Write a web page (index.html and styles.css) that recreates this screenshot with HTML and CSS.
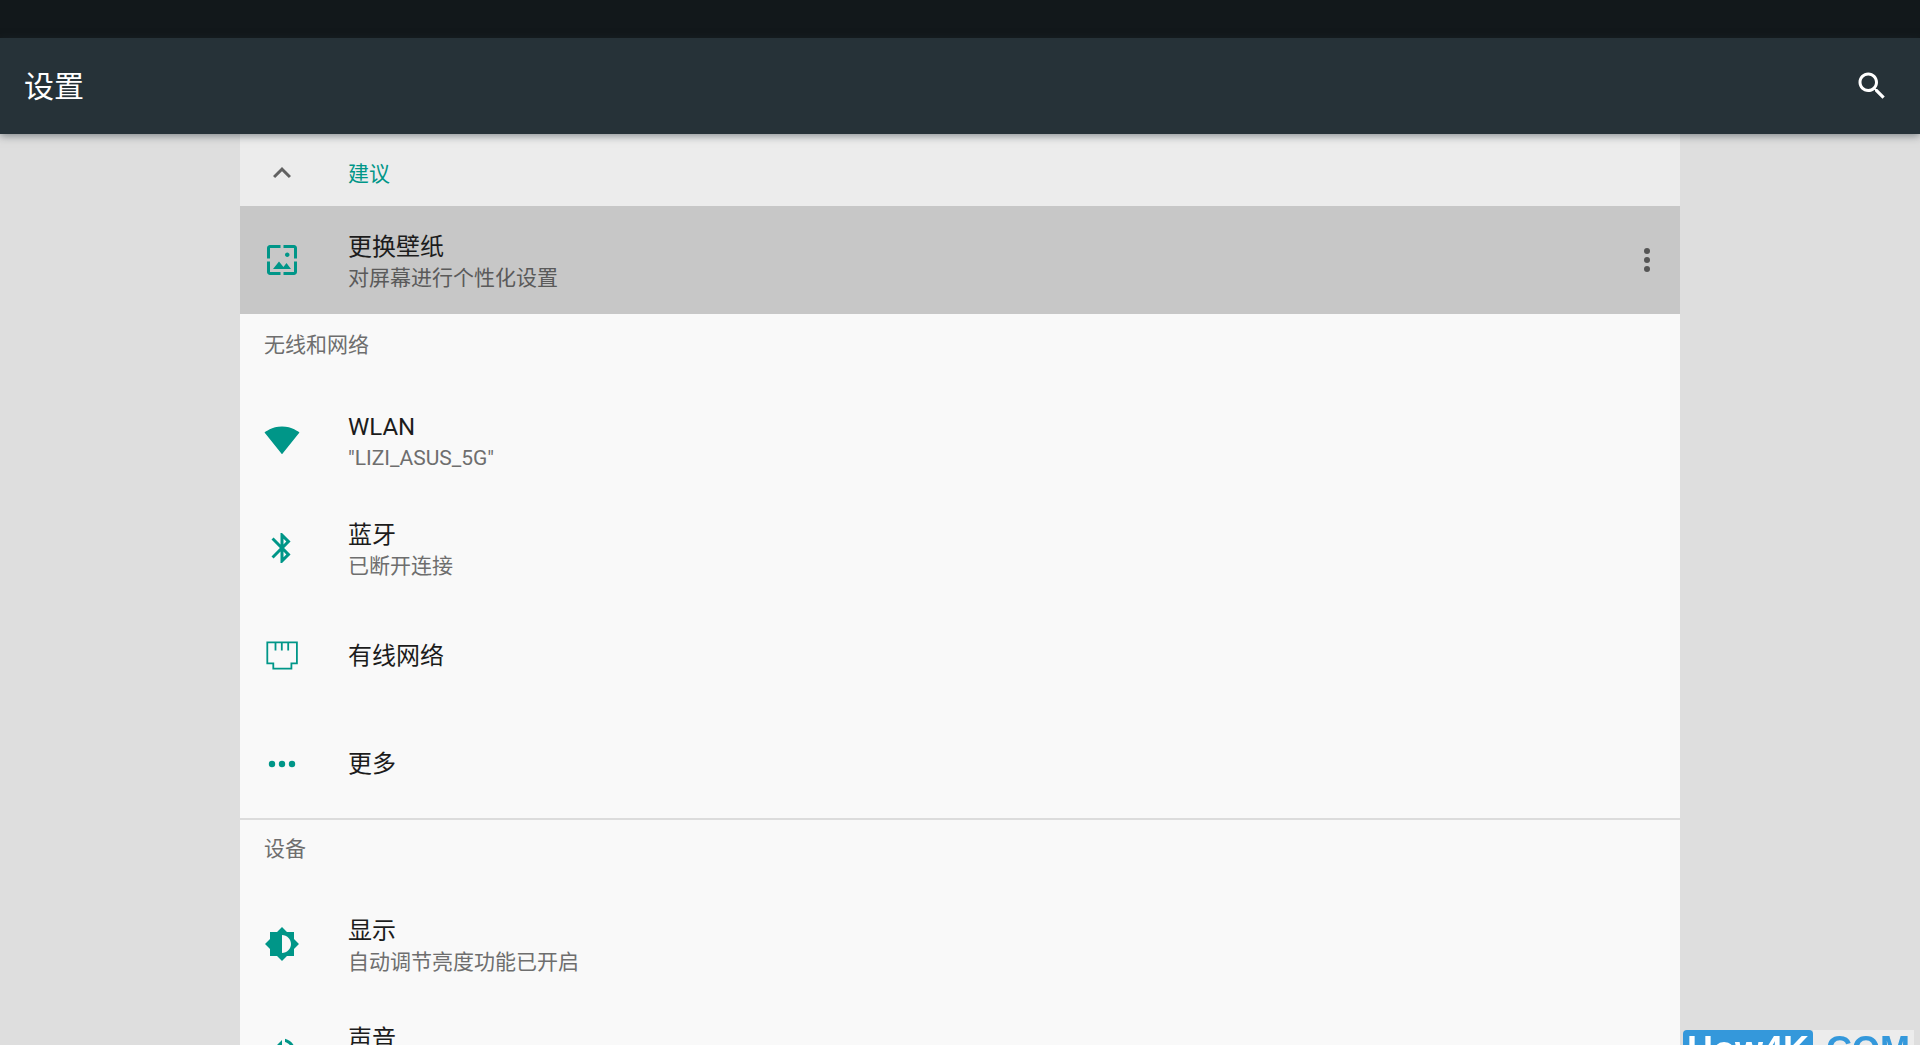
FILE: index.html
```html
<!DOCTYPE html>
<html lang="zh-CN">
<head>
    <meta charset="UTF-8">
    <meta name="viewport" content="width=device-width, initial-scale=1.0">
    <title>设置</title>
    <link rel="stylesheet" href="styles.css">
</head>
<body>
    <div class="status-bar"></div>
    <header class="app-bar">
        <h1>设置</h1>
        <button class="icon-button" type="button" aria-label="搜索">
            <svg class="icon" viewBox="0 0 24 24"><path d="M15.5 14h-.79l-.28-.27C15.41 12.59 16 11.11 16 9.5 16 5.91 13.09 3 9.5 3S3 5.91 3 9.5 5.91 16 9.5 16c1.61 0 3.09-.59 4.23-1.57l.27.28v.79l5 4.99L20.49 19l-4.99-5zm-6 0C7.01 14 5 11.99 5 9.5S7.01 5 9.5 5 14 7.01 14 9.5 11.99 14 9.5 14z"/></svg>
        </button>
    </header>

    <main class="settings">
        <button class="suggestions" type="button" aria-expanded="true">
            <svg class="icon" viewBox="0 0 24 24"><path d="M12 8l-6 6 1.41 1.41L12 10.83l4.59 4.58L18 14z"/></svg>
            <span>建议</span>
        </button>
        <div class="row selected">
            <a class="row-link" href="#wallpaper">
                <svg class="icon" viewBox="0 0 24 24"><path d="M4 4h7V2H4c-1.1 0-2 .9-2 2v7h2V4zm6 9l-4 5h12l-3-4-2.03 2.71L10 13zm7-4.5c0-.83-.67-1.5-1.5-1.5S14 7.67 14 8.5s.67 1.5 1.5 1.5S17 9.33 17 8.5zM20 2h-7v2h7v7h2V4c0-1.1-.9-2-2-2zm0 18h-7v2h7c1.1 0 2-.9 2-2v-7h-2v7zM4 13H2v7c0 1.1.9 2 2 2h7v-2H4v-7z"/></svg>
                <span class="text">
                    <span class="title">更换壁纸</span>
                    <span class="summary">对屏幕进行个性化设置</span>
                </span>
            </a>
            <button class="icon-button more" type="button" aria-label="更多选项">
                <svg class="icon" viewBox="0 0 24 24"><circle cx="12" cy="6" r="2"/><circle cx="12" cy="12" r="2"/><circle cx="12" cy="18" r="2"/></svg>
            </button>
        </div>

        <section>
            <h2>无线和网络</h2>
            <div class="row">
                <a class="row-link" href="#wlan">
                    <svg class="icon" viewBox="0 0 24 24"><path d="M12.01 21.49L23.64 7c-.45-.34-4.93-4-11.64-4C5.28 3 .81 6.66.36 7l11.63 14.49z"/></svg>
                    <span class="text">
                        <span class="title">WLAN</span>
                        <span class="summary">"LIZI_ASUS_5G"</span>
                    </span>
                </a>
            </div>
            <div class="row">
                <a class="row-link" href="#bluetooth">
                    <svg class="icon" viewBox="0 0 24 24"><path d="M17.71 7.71L12 2h-1v7.59L6.41 5 5 6.41 10.59 12 5 17.59 6.41 19 11 14.41V22h1l5.71-5.71-4.3-4.29 4.3-4.29zM13 5.83l1.88 1.88L13 9.59V5.83zm1.88 10.46L13 18.17v-3.76l1.88 1.88z"/></svg>
                    <span class="text">
                        <span class="title">蓝牙</span>
                        <span class="summary">已断开连接</span>
                    </span>
                </a>
            </div>
            <div class="row">
                <a class="row-link" href="#ethernet">
                    <svg class="icon outline" viewBox="0 0 36 36"><path d="M3.3 4.3h29.6v21.1h-5.5v5.3H9.3v-5.3h-6zM11.5 4.5v8M17.8 4.5v8M24.2 4.5v8"/></svg>
                    <span class="text">
                        <span class="title">有线网络</span>
                    </span>
                </a>
            </div>
            <div class="row">
                <a class="row-link" href="#more">
                    <svg class="icon" viewBox="0 0 36 36"><circle cx="8" cy="18" r="3.2"/><circle cx="18" cy="18" r="3.2"/><circle cx="28" cy="18" r="3.2"/></svg>
                    <span class="text">
                        <span class="title">更多</span>
                    </span>
                </a>
            </div>
        </section>

        <section class="divided">
            <h2>设备</h2>
            <div class="row">
                <a class="row-link" href="#display">
                    <svg class="icon" viewBox="0 0 24 24"><path d="M20 15.31L23.31 12 20 8.69V4h-4.69L12 .69 8.69 4H4v4.69L.69 12 4 15.31V20h4.69L12 23.31 15.31 20H20v-4.69zM12 18V6c3.31 0 6 2.69 6 6s-2.69 6-6 6z"/></svg>
                    <span class="text">
                        <span class="title">显示</span>
                        <span class="summary">自动调节亮度功能已开启</span>
                    </span>
                </a>
            </div>
            <div class="row">
                <a class="row-link" href="#sound">
                    <svg class="icon" viewBox="0 0 24 24"><path d="M3 9v6h4l5 5V4L7 9H3zm13.5 3c0-1.77-1.02-3.29-2.5-4.03v8.05c1.48-.73 2.5-2.25 2.5-4.02zM14 3.23v2.06c2.89.86 5 3.54 5 6.71s-2.11 5.85-5 6.71v2.06c4.01-.91 7-4.49 7-8.77s-2.99-7.86-7-8.77z"/></svg>
                    <span class="text">
                        <span class="title">声音</span>
                        <span class="summary">铃声音量为 50%</span>
                    </span>
                </a>
            </div>
        </section>
    </main>

    <div class="watermark"><span class="site">How4K</span><span class="domain">.COM</span></div>
</body>
</html>
```

FILE: styles.css
```css
* {
    box-sizing: border-box;
}

body {
    margin: 0;
    height: 100vh;
    display: flex;
    flex-direction: column;
    overflow: hidden;
    background-color: #dedede;
    color: #1c1c1c;
    font-family: Roboto, "Noto Sans CJK SC", sans-serif;
}

button {
    border: none;
    background: none;
    font: inherit;
    cursor: pointer;
}

.icon {
    width: 36px;
    height: 36px;
    flex: none;
    display: block;
    fill: currentColor;
}

.icon.outline {
    fill: none;
    stroke: currentColor;
    stroke-width: 1.8;
}

.status-bar {
    flex: none;
    height: 38px;
    background-color: #12181b;
}

.app-bar {
    flex: none;
    height: 96px;
    padding: 0 12px 0 24px;
    display: flex;
    align-items: center;
    justify-content: space-between;
    background-color: #263238;
    color: #fff;
    box-shadow: 0 2px 8px rgba(38, 50, 56, 0.5);
    z-index: 1;
}

.app-bar h1 {
    margin: 0;
    padding-bottom: 4px;
    font-size: 30px;
    font-weight: 400;
}

.icon-button {
    padding: 18px;
    color: inherit;
}

.settings {
    flex: 1;
    width: 75%;
    min-height: 0;
    margin: 0 auto;
    overflow: hidden;
    background-color: #f9f9f9;
}

.suggestions {
    width: 100%;
    height: 72px;
    padding: 6px 24px 0;
    display: flex;
    align-items: center;
    gap: 48px;
    background-color: #ececec;
    color: #616161;
    font-size: 21px;
}

.suggestions span {
    padding-bottom: 2px;
    color: #009688;
}

.row {
    height: 108px;
    display: flex;
    align-items: center;
}

.row.selected {
    background-color: #c7c7c7;
}

.row-link {
    flex: 1;
    height: 100%;
    padding: 0 24px;
    display: flex;
    align-items: center;
    gap: 48px;
    color: #009688;
    text-decoration: none;
}

.more {
    padding: 15px;
    color: #555;
}

.text {
    display: flex;
    flex-direction: column;
}

.title {
    color: #1c1c1c;
    font-size: 24px;
    line-height: 36px;
}

.summary {
    color: #6e6e6e;
    font-size: 21px;
    line-height: 26px;
}

.selected .summary {
    color: #5a5a5a;
}

h2 {
    height: 72px;
    margin: 0;
    padding: 16px 24px;
    color: #6e6e6e;
    font-size: 21px;
    font-weight: 400;
    line-height: 30px;
}

.divided h2 {
    padding-top: 14px;
    border-top: 2px solid #dcdcdc;
}

/* site mark runs off the bottom edge of the window */
.watermark {
    position: fixed;
    right: 6px;
    bottom: 0;
    z-index: 2;
    height: 15px;
    display: flex;
    overflow: hidden;
    font-family: "Liberation Sans", Arial, sans-serif;
    font-size: 36px;
    font-weight: 700;
    line-height: 40px;
}

.site {
    height: 40px;
    padding: 0 4px;
    border-radius: 4px;
    background-color: #3498db;
    color: #fff;
}

.domain {
    height: 40px;
    padding: 0 4px 0 3px;
    background-color: #ececec;
    color: #3498db;
}
```
